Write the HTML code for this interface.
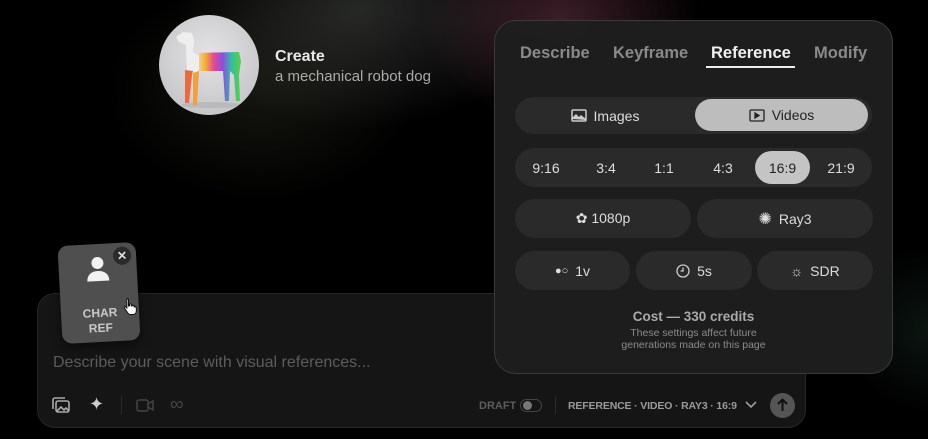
<!DOCTYPE html>
<html><head><meta charset="utf-8"><style>
*{box-sizing:border-box;margin:0;padding:0}
body{width:928px;height:439px;overflow:hidden;background:#000;font-family:"Liberation Sans",sans-serif;position:relative;color:#ddd}
.glow{position:absolute;inset:0;background:
radial-gradient(ellipse 200px 150px at 560px 20px,rgba(120,60,80,.5),transparent 70%),
radial-gradient(ellipse 260px 170px at 360px 10px,rgba(95,100,95,.4),transparent 70%),
radial-gradient(ellipse 220px 160px at 260px 90px,rgba(60,60,45,.35),transparent 70%),
radial-gradient(ellipse 120px 120px at 930px 330px,rgba(40,70,55,.3),transparent 70%);}
.av{position:absolute;left:159px;top:15px;width:100px;height:100px;border-radius:50%;background:radial-gradient(circle at 50% 40%,#e4e4e6,#bdbcc0);overflow:hidden}
.ct{position:absolute;left:275px;top:48px;font-size:16px;color:#e8e8e8;font-weight:bold}
.cs{position:absolute;left:275px;top:68px;font-size:15px;color:#aaa}
.panel{position:absolute;left:494px;top:20px;width:399px;height:354px;border-radius:22px;background:rgba(30,30,30,.96);border:1px solid #3a3a3a}
.tab{position:absolute;top:23px;font-size:16.5px;font-weight:bold;color:#8a8a8a}
.row{position:absolute;background:#2a2a2a;border-radius:20px}
.b{position:absolute;border-radius:20px;background:#2a2a2a;display:flex;align-items:center;justify-content:center;font-size:14px;color:#ddd;gap:7px}
.prompt{position:absolute;left:37px;top:293px;width:769px;height:135px;border-radius:18px;background:#151515;border:1px solid #262626}
.card{position:absolute;left:60px;top:244px;width:78px;height:98px;background:#4f4f4f;border-radius:10px;transform:rotate(-3deg);text-align:center;color:#c8c8c8;font-weight:bold;font-size:12px;box-shadow:0 4px 10px rgba(0,0,0,.5)}
</style></head><body>
<div class="glow"></div>
<div class="av"><svg width="100" height="100" viewBox="0 0 100 100">
<defs><linearGradient id="r" x1="0" x2="1"><stop offset="0" stop-color="#f0e0d8"/><stop offset=".3" stop-color="#f0e0d8"/><stop offset=".45" stop-color="#f4b030"/><stop offset=".58" stop-color="#e24a90"/><stop offset=".72" stop-color="#8a50e0"/><stop offset=".86" stop-color="#30c0a0"/><stop offset="1" stop-color="#60d040"/></linearGradient></defs>
<ellipse cx="52" cy="90" rx="30" ry="3" fill="#aaa" opacity=".5"/>
<path d="M17 22 L24 17 L33 18 L35 26 L34 38 L80 37 L82 46 L80 60 L81 86 L77 86 L75 60 L71 56 L70 86 L66 86 L64 56 L40 56 L38 90 L34 90 L33 60 L30 88 L26 88 L28 55 L27 30 L20 27 Z" fill="url(#r)"/>
<path d="M17 22 L24 17 L33 18 L35 26 L34 38 L40 40 L40 56 L34 58 L28 55 L27 30 L20 27 Z" fill="#eee"/>
<path d="M26 55 L34 56 L33 60 L30 88 L26 88 Z" fill="#e86a40"/><path d="M34 58 L40 56 L38 90 L34 90Z" fill="#f0a040"/></svg></div>
<div class="ct">Create</div>
<div class="cs">a mechanical robot dog</div>

<div class="prompt">
<div style="position:absolute;left:15px;top:60px;font-size:16px;color:#5c5c5c">Describe your scene with visual references...</div>
<svg style="position:absolute;left:14px;top:103px" width="18" height="16" viewBox="0 0 18 16" fill="none" stroke="#aaa" stroke-width="1.6"><rect x="4" y="4" width="13" height="11" rx="2"/><path d="M1 12V3a2 2 0 0 1 2-2h10"/><path d="M5 14l4-4 3 3 2-2 3 3"/></svg>
<div style="position:absolute;left:51px;top:100px;font-size:18px;color:#ccc">✦</div>
<div style="position:absolute;left:83px;top:102px;width:1px;height:18px;background:#2a2a2a"></div>
<svg style="position:absolute;left:98px;top:105px" width="18" height="13" viewBox="0 0 18 13" fill="none" stroke="#444" stroke-width="1.5"><rect x="1" y="1" width="11" height="11" rx="2"/><path d="M12 5l5-3v9l-5-3"/></svg>
<div style="position:absolute;left:132px;top:100px;font-size:19px;color:#444">∞</div>
<div style="position:absolute;left:441px;top:106px;font-size:11px;font-weight:bold;color:#5c5c5c">DRAFT</div>
<div style="position:absolute;left:482px;top:105px;width:22px;height:13px;border-radius:7px;border:1px solid #444"><div style="width:9px;height:9px;border-radius:50%;background:#777;margin:1px 0 0 2px"></div></div>
<div style="position:absolute;left:517px;top:102px;width:1px;height:18px;background:#2a2a2a"></div>
<div style="position:absolute;left:530px;top:106px;font-size:10.5px;letter-spacing:-0.15px;font-weight:bold;color:#9a9a9a;white-space:nowrap">REFERENCE · VIDEO · RAY3 · 16:9</div>
<svg style="position:absolute;left:707px;top:107px" width="12" height="8" viewBox="0 0 12 8" fill="none" stroke="#999" stroke-width="1.6"><path d="M1 1l5 5 5-5"/></svg>
<div style="position:absolute;left:732px;top:99px;width:25px;height:25px;border-radius:50%;background:#555"><svg width="25" height="25" viewBox="0 0 25 25" fill="none" stroke="#111" stroke-width="2"><path d="M12.5 18V7M8 11l4.5-4.5L17 11"/></svg></div>
</div>

<div class="card">
<svg style="position:absolute;left:27px;top:12px" width="24" height="26" viewBox="0 0 24 26" fill="#f2f2f2"><circle cx="12" cy="7" r="6"/><path d="M1 25c0-7 5-10 11-10s11 3 11 10z"/></svg>
<div style="position:absolute;right:5px;top:4px;width:18px;height:18px;border-radius:50%;background:#2a2a2a;color:#ddd;font-size:12px;line-height:18px">✕</div>
<div style="position:absolute;left:0;right:0;top:62px;line-height:15px">CHAR<br>REF</div>
</div>
<svg style="position:absolute;left:123px;top:297px" width="16" height="18" viewBox="0 0 16 18"><path d="M4 1.5c1 0 1.5.6 1.5 1.5v6l1-.2V7.5c0-.8 1.8-.8 1.8 0V9l1-.1c0-.8 1.8-.8 1.8 0v1l.8-.1c.8 0 1.4.5 1.4 1.3v3c0 2-1.5 3.4-3.5 3.4H7.5c-1.2 0-2-.6-2.7-1.5L1.5 11c-.5-.8.6-1.8 1.4-1l1 1V3c0-.9.1-1.5.1-1.5z" fill="#fff" stroke="#111" stroke-width="1"/></svg>

<div class="panel">
<div class="tab" style="left:25px">Describe</div>
<div class="tab" style="left:118px">Keyframe</div>
<div class="tab" style="left:216px;color:#f0f0f0">Reference</div>
<div class="tab" style="left:319px">Modify</div>
<div style="position:absolute;left:211px;top:45px;width:89px;height:2px;background:#eee"></div>

<div class="row" style="left:20px;top:76px;width:357px;height:37px"></div>
<div class="b" style="left:20px;top:76px;width:180px;height:37px;background:none"><svg width="16" height="13" viewBox="0 0 16 13" fill="none" stroke="#ccc" stroke-width="1.5"><rect x="1" y="1" width="14" height="11" rx="1"/><path d="M1 10l4-4 3 3 2-2 5 4" fill="#ccc"/></svg>Images</div>
<div class="b" style="left:200px;top:78px;width:173px;height:32px;background:#bdbdbd;color:#222"><svg width="16" height="13" viewBox="0 0 16 13" fill="none" stroke="#222" stroke-width="1.3"><rect x="1" y="1" width="14" height="11" rx="1"/><path d="M6 4v5l4-2.5z" fill="#222"/></svg>Videos</div>

<div class="row" style="left:20px;top:127px;width:357px;height:39px"></div>
<div class="b" style="left:30px;top:130px;width:42px;height:33px;background:none">9:16</div>
<div class="b" style="left:90px;top:130px;width:42px;height:33px;background:none">3:4</div>
<div class="b" style="left:148px;top:130px;width:42px;height:33px;background:none">1:1</div>
<div class="b" style="left:207px;top:130px;width:42px;height:33px;background:none">4:3</div>
<div class="b" style="left:260px;top:130px;width:55px;height:33px;background:#c4c4c4;color:#222">16:9</div>
<div class="b" style="left:325px;top:130px;width:42px;height:33px;background:none">21:9</div>

<div class="b" style="left:20px;top:178px;width:176px;height:39px">✿ 1080p</div>
<div class="b" style="left:202px;top:178px;width:176px;height:39px"><span style="font-size:16px">✺</span> Ray3</div>

<div class="b" style="left:20px;top:230px;width:115px;height:39px"><span style="font-size:11px">●○</span> 1v</div>
<div class="b" style="left:141px;top:230px;width:116px;height:39px"><svg width="14" height="14" viewBox="0 0 14 14" fill="none" stroke="#ccc" stroke-width="1.3"><circle cx="7" cy="7" r="6"/><path d="M7 3.5V7H4.5"/></svg>5s</div>
<div class="b" style="left:262px;top:230px;width:116px;height:39px"><span style="font-size:14px">☼</span> SDR</div>

<div style="position:absolute;left:0;right:0;top:288px;text-align:center;font-size:13.5px;font-weight:bold;color:#aaa">Cost — 330 credits</div>
<div style="position:absolute;left:0;right:0;top:306px;text-align:center;font-size:10.5px;line-height:12px;color:#8a8a8a">These settings affect future<br>generations made on this page</div>
</div>
</body></html>
